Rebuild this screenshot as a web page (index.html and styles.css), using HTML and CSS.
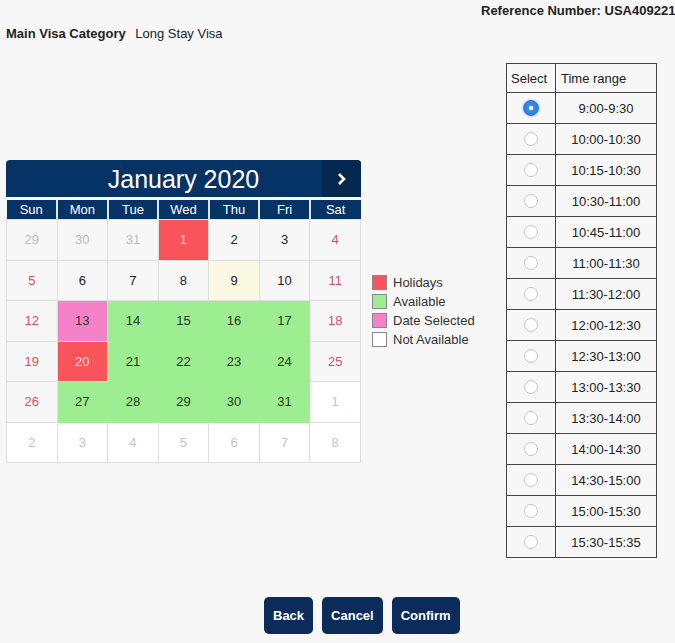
FILE: index.html
```html
<!DOCTYPE html>
<html lang="en">
<head>
    <meta charset="UTF-8">
    <title>Appointment Date</title>
    <link rel="stylesheet" href="styles.css">
</head>
<body>
    <div class="ref">Reference Number: USA4092211</div>
    <div class="info"><b>Main Visa Category</b> <span>Long Stay Visa</span></div>

    <div class="main">
        <div class="calendar">
            <div class="cal-head">
                <span class="cal-title">January 2020</span>
                <span class="cal-next">
                    <svg width="12" height="14" viewBox="0 0 12 14"><path d="M3 2 L8 7 L3 12" fill="none" stroke="#fff" stroke-width="2.6"/></svg>
                </span>
            </div>
            <table class="days">
                <tr class="dow"><th>Sun</th><th>Mon</th><th>Tue</th><th>Wed</th><th>Thu</th><th>Fri</th><th>Sat</th></tr>
                <tr><td class="old">29</td><td class="old">30</td><td class="old">31</td><td class="holiday">1</td><td>2</td><td>3</td><td class="we">4</td></tr>
                <tr><td class="we">5</td><td>6</td><td>7</td><td>8</td><td class="today">9</td><td>10</td><td class="we">11</td></tr>
                <tr><td class="we">12</td><td class="picked">13</td><td class="avail">14</td><td class="avail">15</td><td class="avail">16</td><td class="avail">17</td><td class="we">18</td></tr>
                <tr><td class="we">19</td><td class="holiday">20</td><td class="avail">21</td><td class="avail">22</td><td class="avail">23</td><td class="avail">24</td><td class="we">25</td></tr>
                <tr><td class="we">26</td><td class="avail">27</td><td class="avail">28</td><td class="avail">29</td><td class="avail">30</td><td class="avail">31</td><td class="new">1</td></tr>
                <tr><td class="new">2</td><td class="new">3</td><td class="new">4</td><td class="new">5</td><td class="new">6</td><td class="new">7</td><td class="new">8</td></tr>
            </table>
        </div>

        <ul class="legend">
            <li><i class="sw sw-red"></i>Holidays</li>
            <li><i class="sw sw-green"></i>Available</li>
            <li><i class="sw sw-pink"></i>Date Selected</li>
            <li><i class="sw"></i>Not Available</li>
        </ul>

        <table class="slots">
            <tr><th class="c1">Select</th><th>Time range</th></tr>
            <tr><td class="c1"><input type="radio" name="slot" checked></td><td>9:00-9:30</td></tr>
            <tr><td class="c1"><input type="radio" name="slot"></td><td>10:00-10:30</td></tr>
            <tr><td class="c1"><input type="radio" name="slot"></td><td>10:15-10:30</td></tr>
            <tr><td class="c1"><input type="radio" name="slot"></td><td>10:30-11:00</td></tr>
            <tr><td class="c1"><input type="radio" name="slot"></td><td>10:45-11:00</td></tr>
            <tr><td class="c1"><input type="radio" name="slot"></td><td>11:00-11:30</td></tr>
            <tr><td class="c1"><input type="radio" name="slot"></td><td>11:30-12:00</td></tr>
            <tr><td class="c1"><input type="radio" name="slot"></td><td>12:00-12:30</td></tr>
            <tr><td class="c1"><input type="radio" name="slot"></td><td>12:30-13:00</td></tr>
            <tr><td class="c1"><input type="radio" name="slot"></td><td>13:00-13:30</td></tr>
            <tr><td class="c1"><input type="radio" name="slot"></td><td>13:30-14:00</td></tr>
            <tr><td class="c1"><input type="radio" name="slot"></td><td>14:00-14:30</td></tr>
            <tr><td class="c1"><input type="radio" name="slot"></td><td>14:30-15:00</td></tr>
            <tr><td class="c1"><input type="radio" name="slot"></td><td>15:00-15:30</td></tr>
            <tr><td class="c1"><input type="radio" name="slot"></td><td>15:30-15:35</td></tr>
        </table>
    </div>

    <div class="actions">
        <button>Back</button>
        <button>Cancel</button>
        <button>Confirm</button>
    </div>
</body>
</html>
```

FILE: styles.css
```css
html, body { overflow: hidden; }
body {
    margin: 0;
    background: #f7f7f7;
    font-family: "Liberation Sans", Arial, sans-serif;
    font-size: 13px;
    color: #222;
}

.ref {
    padding: 3px 0 0 481px;
    white-space: nowrap;
    font-weight: bold;
    font-size: 13px;
    line-height: 16px;
    color: #222;
}
.info { padding: 7px 0 0 6px; line-height: 16px; }
.info span { margin-left: 6px; }

.main { display: flex; align-items: flex-start; padding: 21px 0 0 6px; }

/* calendar */
.calendar { width: 355px; margin-top: 97px; }
.cal-head {
    position: relative;
    height: 37px;
    background: #063366;
    border-radius: 4px 4px 0 0;
    color: #fff;
    text-align: center;
    line-height: 38px;
}
.cal-title { font-size: 25px; }
.cal-next {
    position: absolute; top: 0; right: 0;
    width: 39px; height: 37px;
    background: #042850;
    border-radius: 0 4px 0 0;
    display: flex; align-items: center; justify-content: center;
}
.days { width: 355px; border-collapse: collapse; table-layout: fixed; margin-top: 3px; }
.dow th {
    background: #063366;
    color: #fff;
    font-weight: normal;
    height: 19px;
    padding: 0;
    border-left: 2px solid #dfe3ea;
}
.dow th:first-child { border-left: 0; }
.days td {
    height: 39.5px;
    padding: 0;
    text-align: center;
    border: 1px solid #dedede;
    background: #f7f7f7;
    color: #222;
}
.days td.old { color: #bbb; }
.days td.new { color: #c4c4c4; background: #fff; }
.days td.we { color: #d9505e; }
.days td.holiday { background: #f9535b; color: #fdd; }
.days td.today { background: #fcf9e3; }
.days td.avail { background: #9cee90; border-color: #9cee90; color: #1e3a1e; }
.days td.picked { background: #f582c8; color: #333; }

/* legend */
.legend { list-style: none; margin: 210px 0 0 11px; padding: 0; width: 134px; }
.legend li { display: flex; align-items: center; height: 19px; font-size: 13px; color: #333; }
.sw { width: 13px; height: 13px; border: 1px solid #888; background: #fff; margin-right: 6px; }
.sw-red { background: #f9535b; }
.sw-green { background: #9cee90; }
.sw-pink { background: #f582c8; }

/* time slots */
.slots { width: 151px; border-collapse: collapse; border: 1px solid #333; }
.slots th, .slots td { border: 1px solid #444; height: 30px; padding: 0; background: #f7f7f7; }
.slots th { font-weight: normal; text-align: left; padding-left: 5px; height: 28px; }
.slots td { text-align: center; }
.slots .c1 { width: 44px; }
.slots th.c1 { padding-left: 4px; }
.slots input {
    appearance: none;
    width: 14px; height: 14px;
    margin: 3px 0 0;
    border: 1px solid #c5c5c5;
    border-radius: 50%;
    background: #fff;
}
.slots input:checked {
    width: 16px; height: 16px;
    border-color: #2f7fe0;
    background: radial-gradient(circle, #fff 0 2px, #3b8df0 2.5px, #1f74e0 100%);
    box-shadow: 0 0 2px #6aa8f0;
}

/* buttons */
.actions { display: flex; gap: 9px; padding: 39px 0 0 264px; }
.actions button {
    font-family: "Liberation Sans", Arial, sans-serif;
    font-size: 13px;
    font-weight: bold;
    color: #fff;
    background: #0b2b5a;
    border: 0;
    border-radius: 5px;
    height: 37px;
    padding: 0 9px;
}
```
